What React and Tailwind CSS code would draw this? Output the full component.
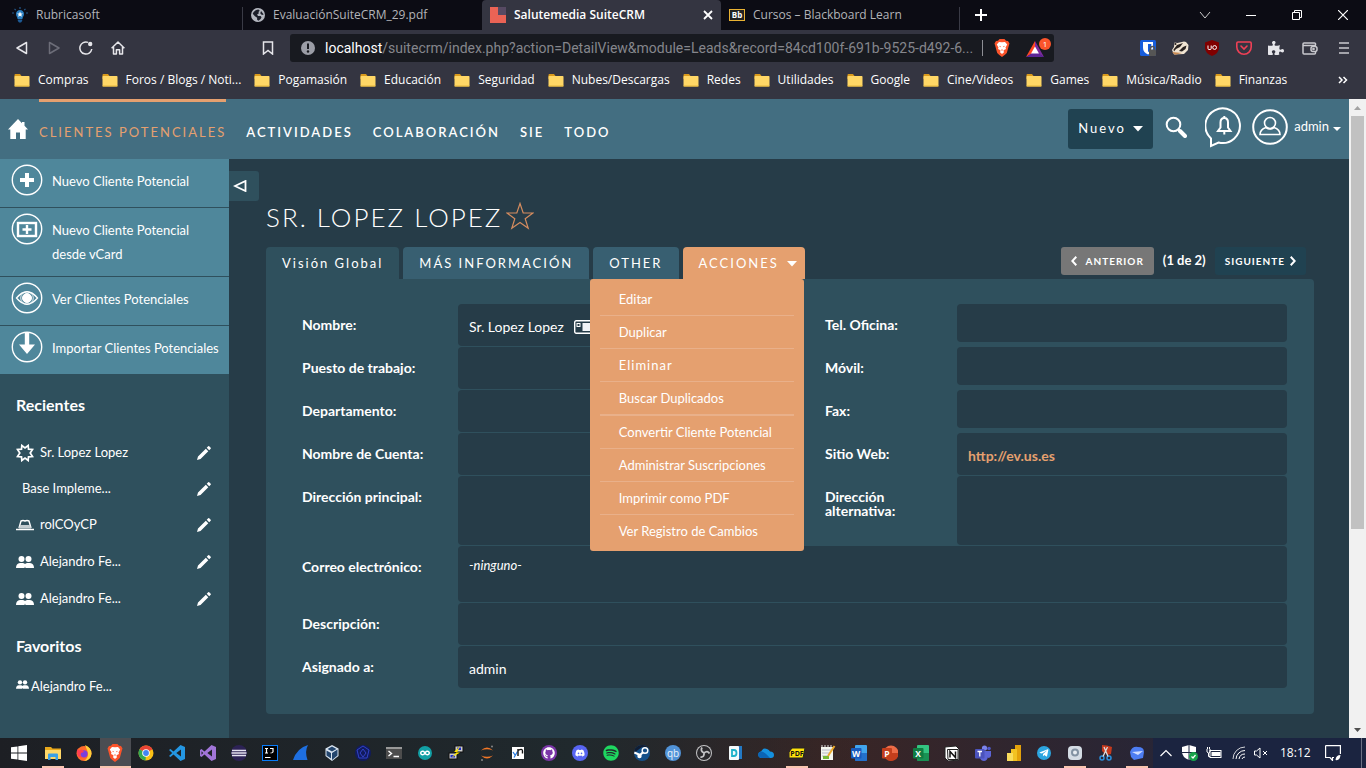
import React from "react";
import { FaGithub, FaDiscord, FaSpotify, FaTelegramPlane, FaInfinity, FaPuzzlePiece } from "react-icons/fa";

/* ---------- Browser chrome ---------- */

const Folder = () => (
  <svg viewBox="0 0 16 14" className="h-3.5 w-4 shrink-0">
    <path d="M0.5 2 Q0.5 1 1.5 1 H6 L7.5 3 H15 V6 H0.5Z" fill="#d99a1c" />
    <rect x="0.5" y="3" width="15" height="10.5" rx="0.8" fill="#ffd766" />
    <path d="M0.5 12.5 H15.5 V13 Q15.5 13.5 15 13.5 H1 Q0.5 13.5 0.5 13Z" fill="#e8b73a" />
  </svg>
);

const Bulb = () => (
  <svg viewBox="0 0 16 16" className="h-4 w-4 shrink-0">
    <path d="M8 3a4 4 0 0 1 4 4.2c0 1.9-1.4 2.6-1.6 4.8H5.600C5.400 9.800 4 9.100 4 7.200A4 4 0 0 1 8 3Z" fill="#2b7fc0" />
    <path d="M8 4.500l.9 2h2l-1.600 1.300.6 2L8 8.700 6.100 9.800l.6-2L5.100 6.500h2z" fill="#fff" />
    <path d="M5.800 12.500h4.400v1.500l-1.200 1.500H7L5.800 14z" fill="#1d5a94" />
    <path d="M8 0v2M2.500 1.800l1.300 1.300M13.500 1.800l-1.300 1.300M0 6h2M14 6h2" stroke="#24588a" strokeWidth="1.200" />
  </svg>
);

const Globe = () => (
  <svg viewBox="0 0 16 16" className="h-3.5 w-3.5 shrink-0">
    <circle cx="8" cy="8" r="8" fill="#b4b7bf" />
    <path d="M2 6.500C2.800 4 5 2.200 8.500 1.800L10 3 8.500 4.500 9 6 7 7.500 8 9h3l1 1.500-1 2-2.500 2L7 13.500V11L4.500 9.500Z" fill="#1c1e29" />
    <path d="M11.500 3.500l3 4-2 .5-2-2z" fill="#1c1e29" />
  </svg>
);

const CrmLogo = () => (
  <svg viewBox="0 0 16 16" className="h-4 w-4 shrink-0">
    <rect width="16" height="16" fill="#ea6355" />
    <rect x="8" width="8" height="8" fill="#574a63" />
  </svg>
);

const Blackboard = () => (
  <span className="flex h-3 w-4 shrink-0 items-center justify-center border border-[#e9b233] bg-[#222] text-[8px] font-bold leading-none text-white">
    Bb
  </span>
);

const BraveLion = () => (
  <svg viewBox="0 0 16 18" className="h-[18px] w-4 shrink-0">
    <path d="M4 1.800L5.500 0H10.500L12 1.800L14 2L15.500 4.500L15 6L12.800 14Q11.500 15.500 8 18Q4.500 15.500 3.200 14L1 6L.5 4.500L2 2Z" fill="#fb542b" />
    <path d="M8 3.300L11 2.900L13.200 5.600L11.500 8.600L12 10L10 11L9.300 12L10.200 13L8 15L5.800 13L6.700 12L6 11L4 10L4.500 8.600L2.800 5.600L5 2.900Z" fill="#fff" />
    <path d="M4.800 6.800L7 7.400L6.500 8.200ZM11.200 6.800L9 7.400L9.500 8.200ZM7 11L8 10.300L9 11L8 11.700Z" fill="#fb542b" />
  </svg>
);

const tabs = [
  { icon: <Bulb />, title: "Rubricasoft" },
  { icon: <Globe />, title: "EvaluaciónSuiteCRM_29.pdf" },
  { icon: <CrmLogo />, title: "Salutemedia SuiteCRM", active: true },
  { icon: <Blackboard />, title: "Cursos – Blackboard Learn" },
];

function TabStrip() {
  return (
    <div className="flex h-[30px] items-stretch bg-[#0c0c14] pl-1">
      {tabs.map((t, i) => (
        <div
          key={t.title}
          className={
            t.active
              ? "flex w-[239px] items-center gap-2 rounded-t bg-[#343541] px-2 font-semibold text-white"
              : "flex w-[239px] items-center gap-2 px-2 text-[#b3b4b9]"
          }
        >
          {t.icon}
          <span className="flex-1 truncate">{t.title}</span>
          {t.active && (
            <button aria-label="Cerrar pestaña">
              <svg viewBox="0 0 10 10" className="h-2.5 w-2.5">
                <path d="M1 1L9 9M9 1L1 9" stroke="#fff" strokeWidth="1.800" />
              </svg>
            </button>
          )}
          {(i === 0 || i === 3) && <span className="-mr-2 h-[23px] w-px self-end bg-[#3a3b46]" />}
        </div>
      ))}
      <button aria-label="Nueva pestaña" className="flex w-[42px] items-center justify-center">
        <svg viewBox="0 0 12 12" className="h-3 w-3">
          <path d="M6 0V12M0 6H12" stroke="#fff" strokeWidth="2" />
        </svg>
      </button>
      <div className="ml-auto flex">
        <button aria-label="Buscar pestañas" className="flex w-[46px] items-center justify-center">
          <svg viewBox="0 0 12 12" className="h-3 w-3" fill="none" stroke="#ccc"><path d="M1 3L6 9L11 3" /></svg>
        </button>
        <button aria-label="Minimizar" className="flex w-[46px] items-center justify-center">
          <svg viewBox="0 0 10 10" className="h-2.5 w-2.5" fill="none" stroke="#fff"><path d="M0 5.500H10" /></svg>
        </button>
        <button aria-label="Restaurar" className="flex w-[46px] items-center justify-center">
          <svg viewBox="0 0 10 10" className="h-2.5 w-2.5" fill="none" stroke="#fff"><path d="M.5 2.500H7.500V9.500H.5ZM2.500 2.500V.5H9.500V7.500H7.500" /></svg>
        </button>
        <button aria-label="Cerrar" className="flex w-[46px] items-center justify-center">
          <svg viewBox="0 0 10 10" className="h-2.5 w-2.5" fill="none" stroke="#fff"><path d="M0 0L10 10M10 0L0 10" strokeWidth="1.200" /></svg>
        </button>
      </div>
    </div>
  );
}

const ToolButton = ({ label, children }) => (
  <button aria-label={label} className="flex h-8 w-8 shrink-0 items-center justify-center text-[#e6e6ea]">
    {children}
  </button>
);

function Toolbar() {
  return (
    <div className="flex h-9 items-center bg-[#343541] pl-1.5 pr-1.5">
      <ToolButton label="Atrás">
        <svg viewBox="0 0 12 14" className="h-3.5 w-3" fill="none" stroke="currentColor" strokeWidth="1.500"><path d="M10.500 1.500V12.500L1 7Z" strokeLinejoin="round" /></svg>
      </ToolButton>
      <ToolButton label="Adelante">
        <svg viewBox="0 0 12 14" className="h-3.5 w-3" fill="none" stroke="#6c6d78" strokeWidth="1.500"><path d="M1.500 1.500V12.500L11 7Z" strokeLinejoin="round" /></svg>
      </ToolButton>
      <ToolButton label="Recargar">
        <svg viewBox="0 0 14 14" className="h-3.5 w-3.5"><path d="M12.800 8A6 6 0 1 1 9 1.400" fill="none" stroke="currentColor" strokeWidth="1.500" /><circle cx="11.200" cy="3" r="2.200" fill="currentColor" /></svg>
      </ToolButton>
      <ToolButton label="Inicio">
        <svg viewBox="0 0 14 14" className="h-3.5 w-3.5" fill="none" stroke="currentColor" strokeWidth="1.500"><path d="M.6 7.200L7 1L13.400 7.200M2.500 6V13H5.400V8.800H8.600V13H11.500V6" strokeLinejoin="round" /></svg>
      </ToolButton>
      <div className="ml-[118px] mr-1.5 shrink-0">
        <ToolButton label="Marcador">
          <svg viewBox="0 0 12 14" className="h-3.5 w-3" fill="none" stroke="currentColor" strokeWidth="1.500"><path d="M1.500 1H10.500V13L6 9.500L1.500 13Z" /></svg>
        </ToolButton>
      </div>
      <div className="flex h-7 min-w-0 flex-1 items-center rounded-[3px] bg-[#181a20] pl-[11px]">
        <svg viewBox="0 0 14 14" className="mr-2.5 h-3.5 w-3.5 shrink-0"><circle cx="7" cy="7" r="7" fill="#9b9da6" /><path d="M7 2.500V8" stroke="#181a20" strokeWidth="2" /><circle cx="7" cy="10.500" r="1.200" fill="#181a20" /></svg>
        <span className="min-w-0 flex-1 overflow-hidden whitespace-nowrap font-['Roboto',sans-serif] text-sm text-[#85868c]">
          <span className="text-white">localhost</span>/suitecrm/index.php?action=DetailView&amp;module=Leads&amp;record=84cd100f-691b-9525-d492-6...
        </span>
        <span className="mr-[11px] h-4 w-px shrink-0 bg-[#8d8e94]" />
        <BraveLion />
        <span className="relative ml-4 h-7 w-7 shrink-0">
          <svg viewBox="0 0 18 16" className="mt-[7px] h-4 w-[18px]">
            <path d="M9 0L0 16L9 11Z" fill="#ff4724" />
            <path d="M9 0L18 16L9 11Z" fill="#7b2a9e" />
            <path d="M0 16H18L9 10Z" fill="#5c2596" />
            <path d="M9 5.500L13 12.500H5Z" fill="#fff" />
          </svg>
          <span className="absolute left-[13px] top-1 flex h-3 w-3 items-center justify-center rounded-full bg-[#fb542b] text-[8px] leading-none text-white">1</span>
        </span>
      </div>
      <div className="ml-[78px] flex">
        <ToolButton label="Bitwarden">
          <svg viewBox="0 0 16 16" className="h-4 w-4"><rect width="16" height="16" rx="1.500" fill="#175ddc" /><path d="M3 2H13V8Q13 12 8 14.500Q3 12 3 8Z" fill="#fff" /><path d="M8 4H11.300V8Q11 10.500 8 12.300Z" fill="#175ddc" /><rect x="9" y="9.500" width="7" height="6.500" rx="1" fill="#555" /><path d="M10.500 10V8.500a2 2 0 0 1 4 0V10" stroke="#555" strokeWidth="1.400" fill="none" /></svg>
        </ToolButton>
        <ToolButton label="Privacy Badger">
          <svg viewBox="0 0 18 14" className="h-3.5 w-[18px]"><path d="M1 9L3 6L3.500 1.500L6.500 2L13 .5L15 1L17.500 4L17 9L13 13L3 13.500Z" fill="#f0e4d2" /><path d="M2.500 8.500L6 4L12 2L9 6L5 8L3 10.500ZM8 10L12 6L15.500 4.500L14.500 8L11 10.500Z" fill="#28211e" /><circle cx="4.500" cy="3" r="1" fill="#28211e" /><path d="M1 11L6 11.500L11 12L4 13.800Z" fill="#c98a52" /></svg>
        </ToolButton>
        <ToolButton label="uBlock Origin">
          <svg viewBox="0 0 14 16" className="h-4 w-3.5"><path d="M7 0L14 2.500V8Q14 13 7 16Q0 13 0 8V2.500Z" fill="#800000" /><path d="M3 5.500V8.500Q3 9.500 4 9.500H5Q6.200 9.500 6.200 8.500V5.500" stroke="#fff" fill="none" /><circle cx="9.600" cy="7.500" r="1.900" stroke="#fff" fill="none" /></svg>
        </ToolButton>
        <ToolButton label="Pocket">
          <svg viewBox="0 0 16 14" className="h-3.5 w-4" fill="none" stroke="#ef4056" strokeWidth="1.600" strokeLinecap="round"><path d="M2 1H14Q15.200 1 15.200 2.200V6A7.200 7.200 0 0 1 .8 6V2.200Q.8 1 2 1Z" /><path d="M5 5L8 8L11 5" /></svg>
        </ToolButton>
        <ToolButton label="Extensiones"><FaPuzzlePiece className="h-4 w-4" /></ToolButton>
      </div>
      <div className="ml-0.5 flex gap-0.5">
        <ToolButton label="Monedero">
          <svg viewBox="0 0 16 13" className="h-[13px] w-4" fill="none" stroke="#c9c9ce" strokeWidth="1.500"><path d="M13.500 3.500V1.800Q13.500 1 12.500 1H2Q1 1 1 2V11Q1 12 2 12H12.500Q13.500 12 13.500 11V10M1 3.500H14" /><rect x="9" y="4.500" width="6" height="5" rx="2" fill="#343541" /><circle cx="11.500" cy="7" r=".6" /></svg>
        </ToolButton>
        <ToolButton label="Menú">
          <svg viewBox="0 0 10 12" className="h-3 w-2.5" stroke="#c9c9ce" strokeWidth="1.500"><path d="M0 1H10M0 6H10M0 11H10" /></svg>
        </ToolButton>
      </div>
    </div>
  );
}

const bookmarks = ["Compras", "Foros / Blogs / Noti...", "Pogamasión", "Educación", "Seguridad", "Nubes/Descargas", "Redes", "Utilidades", "Google", "Cine/Videos", "Games", "Música/Radio", "Finanzas"];

function Bookmarks() {
  return (
    <nav className="flex h-[33px] items-center gap-[13px] bg-[#343541] pb-1.5 pl-3.5 pr-[18px] text-white">
      {bookmarks.map((b) => (
        <a key={b} href="#" className="flex items-center gap-2 whitespace-nowrap">
          <Folder />
          {b}
        </a>
      ))}
      <button aria-label="Más marcadores" className="ml-auto">
        <svg viewBox="0 0 10 8" className="h-2 w-2.5" fill="none" stroke="#fff" strokeWidth="1.500"><path d="M1 1L4 4L1 7M5.500 1L8.500 4L5.500 7" /></svg>
      </button>
    </nav>
  );
}

/* ---------- CRM header ---------- */

const Caret = () => (
  <svg viewBox="0 0 10 6" className="h-1.5 w-2.5 shrink-0" fill="#fff"><path d="M0 0H10L5 5.500Z" /></svg>
);

function Header() {
  return (
    <header className="flex h-[60px] shrink-0 items-stretch bg-[#436e81] pl-2 pr-2 text-[13px] text-white">
      <a href="#" aria-label="Inicio" className="flex items-center">
        <svg viewBox="0 0 20 20" className="h-5 w-5" fill="#fff"><path d="M10 0L0 10.500H2.300V20H8V13.500H12V20H17.700V10.500H20L16.500 6.700V3H14V4.200Z" /></svg>
      </a>
      <nav className="ml-[11px] flex gap-5 font-semibold tracking-[2px]">
        <a href="#" className="flex items-center border-t-[3px] border-[#e5a06f] pt-[5px] font-normal text-[#e5a06f]">CLIENTES POTENCIALES</a>
        {["ACTIVIDADES", "COLABORACIÓN", "SIE", "TODO"].map((n) => (
          <a key={n} href="#" className="flex items-center pt-2">{n}</a>
        ))}
      </nav>
      <div className="ml-auto flex items-center pb-1">
        <button className="mt-1 flex h-10 w-[85px] items-center justify-between rounded-[3px] bg-[#204251] px-2.5 tracking-[2px]">
          Nuevo <Caret />
        </button>
        <button aria-label="Buscar" className="ml-3">
          <svg viewBox="0 0 22 22" className="h-[22px] w-[22px]" fill="none" stroke="#fff"><circle cx="8.500" cy="8.500" r="6.800" strokeWidth="2" /><path d="M13 13L15 15" strokeWidth="2" /><path d="M15 15L20 20" strokeWidth="4" strokeLinecap="round" /></svg>
        </button>
        <button aria-label="Notificaciones" className="ml-[18px]">
          <svg viewBox="0 0 38 42" className="h-[42px] w-[38px]" fill="none" stroke="#fff" strokeWidth="2"><path d="M6 32.500A17.300 17.300 0 1 1 13.500 36.500L6 40Z" /><path d="M13 25H25.500L23 21.500V16.500Q23 12 19.300 12Q15.500 12 15.500 16.500V21.500ZM19.300 10V12M19.300 25.500V28.500" /></svg>
        </button>
        <button aria-label="Perfil" className="ml-[9px]">
          <svg viewBox="0 0 36 36" className="h-9 w-9" fill="none" stroke="#fff" strokeWidth="2"><circle cx="18" cy="18" r="16.800" /><circle cx="18" cy="14" r="5.500" strokeWidth="1.600" /><path d="M14 18.500Q8 20.500 8 25.500H28Q28 20.500 22 18.500Q18 21.500 14 18.500" strokeWidth="1.600" /></svg>
        </button>
        <a href="#" className="ml-1.5 flex items-center gap-1">
          admin
          <svg viewBox="0 0 8 4" className="mt-1 h-1 w-2" fill="#fff"><path d="M0 0H8L4 4Z" /></svg>
        </a>
      </div>
    </header>
  );
}

/* ---------- CRM sidebar ---------- */

const Disc = ({ children }) => (
  <svg viewBox="0 0 32 32" className="-mt-[5px] h-8 w-8 shrink-0" fill="none" stroke="#fff">
    <circle cx="16" cy="16" r="14.700" strokeWidth="1.400" />
    {children}
  </svg>
);

const shortcuts = [
  { label: "Nuevo Cliente Potencial", icon: <path d="M16 9V23M9 16H23" strokeWidth="4" /> },
  {
    label: "Nuevo Cliente Potencial desde vCard",
    icon: (
      <g>
        <rect x="7" y="10" width="18" height="13" strokeWidth="2.400" />
        <path d="M16 12V21M11.500 16.500H20.500" strokeWidth="2.400" />
      </g>
    ),
  },
  {
    label: "Ver Clientes Potenciales",
    icon: (
      <g>
        <path d="M5.500 16Q16 3.500 26.500 16Q16 28.500 5.500 16Z" strokeWidth="1.300" />
        <circle cx="16" cy="16" r="4.500" fill="#fff" />
        <circle cx="16" cy="16" r="6.300" strokeWidth=".8" />
      </g>
    ),
  },
  { label: "Importar Clientes Potenciales", icon: <path d="M13.800 1.500H18.200V13.500H24L16 23L8 13.500H13.800Z" fill="#fff" stroke="none" /> },
];

const People = ({ small }) => (
  <svg viewBox="0 0 18 12" className={small ? "mb-1 h-[9px] w-[13px] shrink-0" : "h-3 w-[18px] shrink-0"} fill="#fff">
    <circle cx="5.500" cy="3" r="3" />
    <circle cx="12.500" cy="3" r="3" />
    <path d="M0 12Q0 7.500 4 7H7Q8.500 7.300 9 8Q9.600 7.300 11 7H14Q18 7.500 18 12H9.500L9 10.500L8.500 12Z" />
  </svg>
);

const Burst = () => (
  <svg viewBox="0 0 18 18" className="h-[18px] w-[18px] shrink-0" fill="none" stroke="#fff" strokeWidth="1.700">
    <path d="M5.800 1.500L9 4L12.200 1.500L12.500 5.200L16.500 5.500L14.200 9L16.500 12.500L12.500 12.800L12.200 16.500L9 14L5.800 16.500L5.500 12.800L1.500 12.500L3.800 9L1.500 5.500L5.500 5.200Z" />
  </svg>
);

const Hat = () => (
  <svg viewBox="0 0 18 12" className="h-3 w-[18px] shrink-0">
    <path d="M3 9L5 2Q7 1 9 2Q11 1 13 2L15 9" fill="none" stroke="#fff" strokeWidth="1.400" />
    <path d="M4 6H14L15 9.500H3Z" fill="#c3ccd0" />
    <path d="M0 10.500H18" stroke="#fff" strokeWidth="1.500" />
  </svg>
);

const Pencil = () => (
  <svg viewBox="0 0 14 14" className="h-3.5 w-3.5" fill="#fff">
    <path d="M0 14L1 10.500L8.800 2.700L11.300 5.200L3.500 13ZM9.700 1.800L11.200.3Q11.700-.1 12.200.3L13.700 1.800Q14.100 2.300 13.700 2.800L12.200 4.300Z" />
  </svg>
);

const recents = [
  { name: "Sr. Lopez Lopez", icon: <Burst />, row: "flex h-[37px] items-center" },
  { name: "Base Impleme...", icon: null, row: "flex h-[35px] items-center pl-1.5" },
  { name: "rolCOyCP", icon: <Hat />, row: "flex h-[37px] items-center" },
  { name: "Alejandro Fe...", icon: <People />, row: "flex h-[37px] items-center" },
  { name: "Alejandro Fe...", icon: <People />, row: "flex h-[37px] items-center" },
];

function Sidebar() {
  return (
    <aside className="w-[229px] shrink-0 bg-[#2f505d] text-[13px] text-white">
      <ul className="divide-y divide-[#2f505d]">
        {shortcuts.map((s) => (
          <li key={s.label} className="min-h-[49px] bg-[#4f879b] last:min-h-12">
            <a href="#" className="flex gap-2 py-2.5 pl-[11px] pr-1 leading-6">
              <Disc>{s.icon}</Disc>
              <span className="ml-px max-w-[172px]">{s.label}</span>
            </a>
          </li>
        ))}
      </ul>
      <h2 className="mt-[19px] px-4 text-base font-bold leading-6">Recientes</h2>
      <ul className="mt-[17px] px-4">
        {recents.map((r, i) => (
          <li key={i} className={r.row}>
            <a href="#" className="flex flex-1 items-center gap-1.5">
              {r.icon}
              <span>{r.name}</span>
            </a>
            <button aria-label={"Editar " + r.name} className="mr-0.5"><Pencil /></button>
          </li>
        ))}
      </ul>
      <h2 className="mt-[17px] px-4 text-base font-bold leading-6">Favoritos</h2>
      <a href="#" className="mt-4 flex items-center gap-0.5 px-4 leading-6"><People small />Alejandro Fe...</a>
    </aside>
  );
}

/* ---------- Detail view ---------- */

/* Two groups, parted by a thicker rule. */
const actionGroups = [
  ["Editar", "Duplicar", "Eliminar", "Buscar Duplicados"],
  ["Convertir Cliente Potencial", "Administrar Suscripciones", "Imprimir como PDF", "Ver Registro de Cambios"],
];

function ActionsMenu() {
  return (
    <div className="absolute right-px top-8 z-10 w-[214px] divide-y-2 divide-[#e9b08a] rounded-[3px] bg-[#e5a06f] px-2.5 py-1 text-[13px] text-white">
      {actionGroups.map((group) => (
        <ul key={group[0]} className="divide-y divide-[#e9b08a]">
          {group.map((a) => (
            <li key={a}>
              <a href="#" className={a === "Eliminar" ? "block px-[19px] leading-8 tracking-[1px]" : "block px-[19px] leading-8"}>{a}</a>
            </li>
          ))}
        </ul>
      ))}
    </div>
  );
}

const tabBase = "flex h-8 items-center rounded-t-[4px] px-4 pt-0.5 tracking-[2px] whitespace-nowrap";

function ViewTabs() {
  return (
    <div className="flex items-start text-[13px]">
      <ul className="flex gap-1">
        <li><a href="#" className={tabBase + " bg-[#2f505d]"}>Visión Global</a></li>
        <li><a href="#" className={tabBase + " bg-[#385f71]"}>MÁS INFORMACIÓN</a></li>
        <li><a href="#" className={tabBase + " bg-[#385f71]"}>OTHER</a></li>
        <li className="relative">
          <button className="flex h-8 items-center gap-2 whitespace-nowrap rounded-t-[4px] bg-[#e5a06f] pl-4 pr-2 pt-0.5 tracking-[2px]">
            ACCIONES <Caret />
          </button>
          <ActionsMenu />
        </li>
      </ul>
      <div className="ml-auto mr-2 flex h-7 items-center text-[10px] font-bold">
        <button className="flex h-7 items-center gap-[9px] rounded-[3px] bg-[#777] px-2.5 tracking-[1px]">
          <svg viewBox="0 0 6 10" className="h-2.5 w-1.5" fill="none" stroke="#fff" strokeWidth="2"><path d="M5.300 .8L1.300 5L5.300 9.200" /></svg>
          ANTERIOR
        </button>
        <span className="mx-[9px] text-[13px]">(1 de 2)</span>
        <button className="flex h-7 items-center gap-[5px] rounded-[3px] bg-[#204251] px-2.5 tracking-[1px]">
          SIGUIENTE
          <svg viewBox="0 0 6 10" className="h-2.5 w-1.5" fill="none" stroke="#fff" strokeWidth="2"><path d="M.7 .8L4.700 5L.7 9.200" /></svg>
        </button>
      </div>
    </div>
  );
}

const Card = () => (
  <svg viewBox="0 0 24 14" className="h-3.5 w-6"><rect x=".7" y=".7" width="22.600" height="12.600" rx="1.500" fill="#263c48" stroke="#fff" strokeWidth="1.400" /><rect x="3" y="3.500" width="3" height="3" fill="none" stroke="#fff" /><rect x="8.500" y="3" width="13" height="8" fill="#f2f4f7" /></svg>
);

const Field = ({ label, value, size = "h-[42px]", labelWidth = "w-[156px]" }) => (
  <div className="flex">
    <div className={labelWidth + " shrink-0 pr-8 pt-3.5 text-sm font-bold leading-[14px]"}>{label}</div>
    <div className={size + " flex flex-1 items-start gap-2.5 rounded-[4px] bg-[#263c48] px-[11px] py-3 text-sm leading-[22px]"}>{value}</div>
  </div>
);

function DetailPanel() {
  const right = "w-[132px]";
  return (
    <section className="rounded-b-[4px] rounded-tr-[4px] bg-[#2f505d] pb-[26px] pl-9 pr-[27px] pt-[25px]">
      <div className="grid grid-cols-2 gap-px">
        <div className="flex flex-col gap-px pr-[6px]">
          <Field label="Nombre:" value={<>Sr. Lopez Lopez <span className="mt-1"><Card /></span></>} />
          <Field label="Puesto de trabajo:" />
          <Field label="Departamento:" />
          <Field label="Nombre de Cuenta:" />
          <Field label="Dirección principal:" size="h-[69px]" />
        </div>
        <div className="flex flex-col gap-px pl-[30px]">
          <div className="h-[42px]"><Field label="Tel. Oficina:" size="h-[38px]" labelWidth={right} /></div>
          <div className="h-[42px]"><Field label="Móvil:" size="h-[38px]" labelWidth={right} /></div>
          <div className="h-[42px]"><Field label="Fax:" size="h-[38px]" labelWidth={right} /></div>
          <Field label="Sitio Web:" labelWidth={right} value={<a href="#" className="font-bold text-[#e5a06f]">http://ev.us.es</a>} />
          <Field label="Dirección alternativa:" size="h-[69px]" labelWidth={right} />
        </div>
        <div className="col-span-2 flex flex-col gap-px">
          <Field label="Correo electrónico:" size="h-14" value={<em className="-mt-1 text-[13px]">-ninguno-</em>} />
          <Field label="Descripción:" />
          <Field label="Asignado a:" value="admin" />
        </div>
      </div>
    </section>
  );
}

function Detail() {
  return (
    <main className="flex flex-1 items-start bg-[#263c48] pr-[35px] pt-3 text-white">
      <button aria-label="Ocultar barra lateral" className="flex h-[30px] w-[30px] items-center rounded-r-[3px] bg-[#2f505d] pl-1">
        <svg viewBox="0 0 14 12" className="h-3 w-3.5" fill="none" stroke="#fff" strokeWidth="1.800"><path d="M12.500 1V11L2 6Z" /></svg>
      </button>
      <div className="ml-[7px] flex-1 pt-7">
        <div className="mb-3 flex h-9 items-center gap-1">
          <h1 className="text-[26px] font-light tracking-[2px]">SR. LOPEZ LOPEZ</h1>
          <button aria-label="Favorito">
            <svg viewBox="0 0 28 28" className="mb-0.5 h-7 w-7" fill="none" stroke="#d58c5f" strokeWidth="1.200"><path d="M14 1.500L17.200 11H27L19.200 16.800L22.200 26.200L14 20.500L5.800 26.200L8.800 16.800L1 11H10.800Z" /></svg>
          </button>
        </div>
        <ViewTabs />
        <DetailPanel />
      </div>
    </main>
  );
}

const Scrollbar = () => (
  <div aria-hidden="true" className="flex w-[17px] shrink-0 flex-col items-center bg-[#f1f1f1]">
    <svg viewBox="0 0 17 17" className="h-[17px] w-[17px]" fill="#a3a3a3"><path d="M5 11H12L8.500 7Z" /></svg>
    <div className="h-[413px] w-[13px] bg-[#c1c1c1]" />
    <svg viewBox="0 0 17 17" className="mt-auto h-[17px] w-[17px]" fill="#505050"><path d="M5 7H12L8.500 11Z" /></svg>
  </div>
);

/* ---------- Taskbar ---------- */

const Ico = ({ children }) => <svg viewBox="0 0 16 16" className="h-4 w-4">{children}</svg>;
const Round = ({ fill, children }) => <Ico><circle cx="8" cy="8" r="8" fill={fill} />{children}</Ico>;
const Office = ({ dark, light, letter }) => (
  <Ico>
    <rect x="4" y="0" width="12" height="16" rx="1" fill={light} />
    <rect x="4" y="8" width="12" height="8" fill={dark} opacity=".7" />
    <rect x="0" y="3" width="10.500" height="10.500" rx="1" fill={dark} />
    <text x="5.200" y="11.500" fontSize="8.500" fontWeight="bold" textAnchor="middle" fill="#fff">{letter}</text>
  </Ico>
);

const apps = [
  { n: "Explorador", open: true, i: <Ico><path d="M0 2H6L7.500 3.500H16V14H0Z" fill="#e9a91c" /><path d="M0 5H16V14H0Z" fill="#ffd868" /><path d="M3 15V9.500Q3 8.500 4 8.500H12Q13 8.500 13 9.500V15H10.500V12H5.500V15Z" fill="#3ba0e6" /></Ico> },
  { n: "Firefox", i: <Ico><circle cx="8" cy="8.500" r="7.500" fill="#ff6a2b" /><path d="M9 0Q15.800 3 15.500 9A7.500 7.500 0 0 1 8 16Q14 12 11 5Z" fill="#ffcf3a" /><circle cx="8" cy="8.800" r="3.600" fill="#7a3fe0" /><path d="M1 4L3 5.500L6 4.500L8 7L5 8Q3 11 7 12.500Q3 13 1.500 10Z" fill="#ff3d55" /></Ico> },
  { n: "Brave", open: true, active: true, i: <BraveLion /> },
  { n: "Chrome", i: <Ico><circle cx="8" cy="8" r="7.500" fill="#fbc116" /><path d="M8 8L1.500 4.300A7.500 7.500 0 0 1 14.500 4.300Z" fill="#ea4335" /><path d="M8 8L1.500 4.300A7.500 7.500 0 0 0 7.500 15.500Z" fill="#34a853" /><circle cx="8" cy="8" r="3.800" fill="#fff" /><circle cx="8" cy="8" r="2.900" fill="#4285f4" /></Ico> },
  { n: "VS Code", i: <Ico><path d="M11.500 0L16 2V14L11.500 16L4.500 9.500L1.500 12L0 11L3.200 8L0 5L1.500 4L4.500 6.500ZM12 4.500L7.300 8L12 11.500Z" fill="#2497e3" fillRule="evenodd" /></Ico> },
  { n: "Visual Studio", i: <Ico><path d="M11.500 0L16 2V14L11.500 16L4.500 9.500L1.500 12L0 11V5L1.500 4L4.500 6.500ZM12 4.500L7.300 8L12 11.500ZM1.500 6.200V9.800L3.200 8Z" fill="#a175d8" fillRule="evenodd" /></Ico> },
  { n: "Eclipse", i: <Round fill="#2c2255"><path d="M1 5.500H15M.5 8H15.500M1 10.500H15" stroke="#e5e2f0" strokeWidth="1.300" /></Round> },
  { n: "IntelliJ", i: <Ico><rect x=".5" y=".5" width="15" height="15" fill="#000" stroke="#087cfa" /><path d="M3 3.500H6M4.500 3.500V8M3 8H6M8 3.500H11V7Q10.800 8 8.500 8M3 12.500H8.500" stroke="#fff" strokeWidth="1.200" fill="none" /></Ico> },
  { n: "Wireshark", i: <Ico><path d="M0 15Q4 3 15 0Q11.500 6 14.500 15Z" fill="#1e6fe0" /></Ico> },
  { n: "VirtualBox", i: <Ico><path d="M8 0L14.500 3.500V11L8 16L1.500 11V3.500Z" fill="#dbe6f2" /><path d="M8 15V8L13.500 4.500V10.500ZM3.500 4L8 1.500L12.500 4L8 6.500Z" fill="#24466e" /><path d="M2.500 5.500L7 8V13.500L2.500 10.500Z" fill="#24466e" /></Ico> },
  { n: "Máquina", i: <Round fill="#111b5e"><path d="M8 1L14 5L12 13H4L2 5ZM8 4L11 8L8 12L5 8Z" stroke="#3142c8" fill="none" /></Round> },
  { n: "Terminal", i: <Ico><rect y="2" width="16" height="12" fill="#4d4d4d" /><rect y="2" width="16" height="2" fill="#999" /><path d="M2.500 6L5.500 8.500L2.500 11M7.500 11.500H13" stroke="#fff" strokeWidth="1.400" fill="none" /></Ico> },
  { n: "Arduino", i: <span className="flex h-3.5 w-3.5 items-center justify-center rounded-full bg-[#12a0a5]"><FaInfinity className="h-2.5 w-2.5 text-white" /></span> },
  { n: "PuTTY", i: <Ico><rect x="7" y="1" width="8" height="6" fill="#ccc" stroke="#111" /><rect x="1" y="8" width="8" height="6" fill="#ccc" stroke="#111" /><path d="M2.500 10H7V12.500H2.500ZM9 2.500H13V5H9Z" fill="#1f2ed0" /><path d="M12 1L6 7H9L3 13L12 7.500H9Z" fill="#ffe600" /></Ico> },
  { n: "Jupyter", i: <Ico><path d="M2 5.500Q8-.5 14 5.500Q8 2.800 2 5.500ZM2 10.500Q8 16.500 14 10.500Q8 13.200 2 10.500Z" fill="#f37726" /><circle cx="13" cy="1.500" r="1" fill="#888" /><circle cx="3" cy="15" r="1" fill="#888" /></Ico> },
  { n: "yn", i: <Ico><rect x="2" y="2" width="12" height="12" fill="#fff" /><path d="M3 7L5 10M7.500 6.500L4 12.500" stroke="#2a7de1" strokeWidth="1.300" /><path d="M8 11V4M8 5.500Q12.500 3 12.500 6V8.500" stroke="#111" strokeWidth="1.400" fill="none" /></Ico> },
  { n: "GitHub", i: <span className="flex h-4 w-4 items-center justify-center rounded-full bg-[#7b35a8]"><FaGithub className="h-3 w-3 text-white" /></span> },
  { n: "Discord", i: <span className="flex h-4 w-4 items-center justify-center rounded-full bg-[#5865f2]"><FaDiscord className="h-2.5 w-2.5 text-white" /></span> },
  { n: "Spotify", i: <FaSpotify className="h-4 w-4 text-[#1ed760]" /> },
  { n: "Steam", i: <Round fill="#14508a"><path d="M0 8A8 8 0 0 1 14 2.800L8 2Z" fill="#111d33" /><path d="M.3 7.500L6 10L11 5.500" stroke="#fff" strokeWidth="2.200" fill="none" /><circle cx="11" cy="5.500" r="2.800" fill="#14508a" stroke="#fff" strokeWidth="1.400" /><circle cx="5.500" cy="11" r="2.200" fill="#fff" /></Round> },
  { n: "qBittorrent", i: <Round fill="#5193d8"><text x="8" y="11.500" fontSize="10" textAnchor="middle" fill="#e8f1fa">qb</text></Round> },
  { n: "OBS", i: <Round fill="#c4c4c6"><circle cx="8" cy="8" r="7" fill="#2b2a2d" /><path d="M8 8Q4 6 6 2.500M8 8Q11.500 5 13.500 8.500M8 8Q8.500 12.500 4.500 12" stroke="#c4c4c6" strokeWidth="1.800" fill="none" /></Round> },
  { n: "Dictado", i: <Ico><path d="M10 1H15V14H10Z" fill="#2379c4" /><rect x="2" y="1" width="10" height="14" rx="1" fill="#f3fafc" /><path d="M5 5H7Q9.500 5 9.500 8Q9.500 11 7 11H5Z" fill="none" stroke="#1bb1c9" strokeWidth="1.800" /></Ico> },
  { n: "OneDrive", i: <Ico><path d="M3 13A3.300 3.300 0 0 1 3 6.500Q5 2.500 9 4Q11 4.500 12 6.500Q16 6.800 16 10Q16 13 13 13Z" fill="#1490df" /><path d="M3 13A3.300 3.300 0 0 1 2 6.800Q5 5 12 13Z" fill="#0a64b5" /></Ico> },
  { n: "PDF", open: true, i: <Ico><path d="M3 3H16L14 13H0V7Z" fill="#ffe10a" stroke="#222" /><text x="8" y="11" fontSize="7" fontWeight="bold" textAnchor="middle" fill="#111">PDF</text></Ico> },
  { n: "Notepad++", i: <Ico><rect x="1" y="2" width="12" height="13" fill="#f3f5ee" /><path d="M2 2V0M5 2V0M8 2V0M11 2V0" stroke="#ddd" /><path d="M2 5H11M2 8H9M2 11H8" stroke="#aab" strokeWidth=".8" /><path d="M3 11H9V14H3Z" fill="#78bb35" /><path d="M14.500 1L8 11" stroke="#ecaa2c" strokeWidth="2" /></Ico> },
  { n: "Word", i: <Office dark="#185abd" light="#41a5ee" letter="W" /> },
  { n: "PowerPoint", i: <Ico><circle cx="9" cy="8" r="7.500" fill="#ed6c47" /><path d="M9 8H16.500A7.500 7.500 0 0 1 4 14Z" fill="#c43e1c" /><rect y="3" width="10" height="10.500" rx="1" fill="#c43e1c" /><text x="5" y="11.500" fontSize="8.500" fontWeight="bold" textAnchor="middle" fill="#fff">P</text></Ico> },
  { n: "Excel", i: <Office dark="#107c41" light="#33c481" letter="X" /> },
  { n: "Notion", i: <Ico><path d="M1 2L12 1L15 4V15L4 16L1 13Z" fill="#fff" stroke="#222" /><path d="M3.500 4.500H14V14.500H4Z" fill="#fff" stroke="#222" /><path d="M6 12.500V6.500L11.500 12.500V6.500" stroke="#111" strokeWidth="1.500" fill="none" /></Ico> },
  { n: "Teams", i: <Ico><circle cx="9.500" cy="3" r="2.600" fill="#7b83eb" /><circle cx="14" cy="3.500" r="1.800" fill="#5059c9" /><path d="M5 6H13V12Q12 16 9 16Q6 16 5 13ZM13 6H16V11Q15.500 13 13 13Z" fill="#5c64d6" /><rect y="4" width="9.500" height="9.500" rx="1" fill="#4b53bc" /><path d="M2.500 6.500H7M4.800 6.500V11.500" stroke="#fff" strokeWidth="1.300" /></Ico> },
  { n: "Power BI", i: <Ico><rect x="9" y="0" width="6" height="16" fill="#e3a10b" /><rect x="5" y="4" width="6" height="12" fill="#f2c222" /><rect x="1" y="8" width="6" height="8" fill="#f9dc5c" /></Ico> },
  { n: "Telegram", i: <span className="flex h-3.5 w-3.5 items-center justify-center rounded-full bg-[#2ca5e0]"><FaTelegramPlane className="h-2.5 w-2.5 text-white" /></span> },
  { n: "Capturas", open: true, i: <Ico><rect x="1" y="1" width="14" height="14" rx="4" fill="#d4dce4" /><circle cx="8" cy="7.500" r="4" fill="#8292a2" /><circle cx="8" cy="7.500" r="2" fill="#e8edf2" /></Ico> },
  { n: "Recortes", i: <Ico><path d="M4 0Q9 0 14 2L13 9L9 10L8 4L7 9L4 6Z" fill="#c63a1d" /><circle cx="4" cy="13" r="2" fill="none" stroke="#2a8fdd" strokeWidth="1.500" /><circle cx="11" cy="13" r="2" fill="none" stroke="#2a8fdd" strokeWidth="1.500" /><path d="M6 2L10 11.500M9.500 2L5 11.500" stroke="#ddd" strokeWidth="1.300" /></Ico> },
  { n: "Correo", open: true, i: <Ico><path d="M1 7Q3 1 9 2Q15 2 15 7L14 13L5 15L2 12Z" fill="#4d7df2" /><path d="M3 7L14 6L9 10Z" fill="#cfdcff" /></Ico> },
];

function Taskbar() {
  return (
    <footer className="flex h-[30px] shrink-0 items-stretch bg-linear-to-r from-[#1d1f24] via-[#3a2524] via-60% to-[#1b2440] text-white">
      <div className="flex min-w-0 flex-1 bg-linear-to-r from-[#1d1f24] from-0% via-[#20292d] via-50% to-transparent to-75%">
        <button aria-label="Inicio" className="flex w-[38px] shrink-0 items-center justify-center">
          <svg viewBox="0 0 16 16" className="h-4 w-4" fill="#fff"><path d="M0 2.300L6.500 1.400V7.500H0ZM7.300 1.300L16 0V7.500H7.300ZM0 8.400H6.500V14.600L0 13.700ZM7.300 8.400H16V16L7.300 14.700Z" /></svg>
        </button>
        {apps.map((a) => (
          <button
            key={a.n}
            aria-label={a.n}
            className={a.active ? "flex flex-1 flex-col items-center bg-[#4b4d52]" : "flex flex-1 flex-col items-center"}
          >
            <span className="flex flex-1 items-center">{a.i}</span>
            <span className={a.active ? "-mt-0.5 h-0.5 w-full bg-[#f9c5b0]" : a.open ? "-mt-0.5 h-0.5 w-[22px] bg-[#f9c5b0]" : "hidden"} />
          </button>
        ))}
      </div>
      <div className="flex w-[213px] shrink-0 items-center bg-[#1b2440] pl-[7px]">
        <svg viewBox="0 0 12 8" className="h-2 w-3" fill="none" stroke="#fff" strokeWidth="1.200"><path d="M.5 7L6 1.500L11.500 7" /></svg>
        <svg viewBox="0 0 16 16" className="ml-2.5 h-4 w-4"><path d="M7 0L14 2V7Q14 12 7 15Q0 12 0 7V2Z" fill="#fff" /><path d="M7 0V15M0 7.500H14" stroke="#1b2440" /><circle cx="11.500" cy="11.500" r="4.500" fill="#16a34a" /><path d="M9.500 11.500L11 13L13.500 10" stroke="#fff" strokeWidth="1.200" fill="none" /></svg>
        <svg viewBox="0 0 16 12" className="ml-2 h-3 w-4" fill="none" stroke="#fff"><rect x="4" y="3.500" width="11" height="7" /><rect x="6" y="5.500" width="8" height="3" fill="#fff" /><path d="M1 2V5Q2.500 7 4 5V2M1.500 0V2M3.500 0V2M2.500 6V9.500H4" /></svg>
        <svg viewBox="0 0 14 14" className="ml-2.5 h-3.5 w-3.5" fill="none" stroke="#fff"><path d="M1 13A12 12 0 0 1 13 1" opacity=".8" /><path d="M4 13A9 9 0 0 1 13 4.500M7 13A6 6 0 0 1 13 8M10 13A3 3 0 0 1 13 11" /></svg>
        <svg viewBox="0 0 14 12" className="ml-2 h-3 w-3.5" fill="none" stroke="#fff"><path d="M.5 4H2.500L6 1V11L2.500 8H.5ZM9 4L13 8M13 4L9 8" /></svg>
        <span className="ml-3 text-xs">18:12</span>
        <svg viewBox="0 0 16 16" className="ml-auto mr-5 h-4 w-4" fill="none" stroke="#fff" strokeWidth="1.200"><path d="M.6 .6H15.400V9M.6 .6V12.500H5L7.500 15.500V12.500H9" /><path d="M15.500 10Q11 10 10.500 15Q15 16 15.500 10Z" fill="#fff" stroke="none" /></svg>
        <span className="mr-1 h-full w-px bg-[#6b7184]" />
      </div>
    </footer>
  );
}

export default function App() {
  return (
    <div className="flex h-screen flex-col overflow-hidden font-['Lato',sans-serif]">
      <div className="shrink-0 font-['Open_Sans','Noto_Sans',sans-serif] text-xs">
        <TabStrip />
        <Toolbar />
        <Bookmarks />
      </div>
      <div className="flex min-h-0 flex-1">
        <div className="flex min-w-0 flex-1 flex-col overflow-hidden">
          <Header />
          <div className="flex min-h-0 flex-1">
            <Sidebar />
            <Detail />
          </div>
        </div>
        <Scrollbar />
      </div>
      <div className="shrink-0 font-['Open_Sans','Noto_Sans',sans-serif]">
        <Taskbar />
      </div>
    </div>
  );
}
